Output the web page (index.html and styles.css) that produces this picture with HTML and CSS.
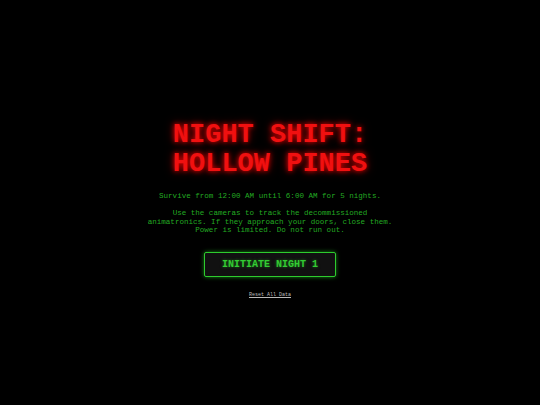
FILE: index.html
```html
<!DOCTYPE html>
<html>
<head>
<meta charset="utf-8">
<link rel="stylesheet" href="styles.css">
</head>
<body>
<main class="screen">
  <h1 class="title">NIGHT SHIFT:<br>HOLLOW PINES</h1>
  <p class="intro">Survive from 12:00 AM until 6:00 AM for 5 nights.</p>
  <p class="desc">Use the cameras to track the decommissioned animatronics. If they approach your doors, close them. Power is limited. Do not run out.</p>
  <button class="start">INITIATE NIGHT 1</button>
  <a class="reset" href="#">Reset All Data</a>
</main>
</body>
</html>
```
FILE: styles.css
```css
html, body {
  margin: 0;
  padding: 0;
  background: #000;
  height: 100%;
}
body {
  font-family: "Liberation Mono", "Courier New", monospace;
}
.screen {
  height: 100vh;
  display: flex;
  flex-direction: column;
  align-items: center;
  justify-content: center;
  text-align: center;
  padding-top: 13px;
  box-sizing: border-box;
}
.title {
  margin: 0;
  font-size: 27px;
  line-height: 29px;
  font-weight: bold;
  color: #f01010;
  text-shadow: 0 0 5px #e00000, 0 0 10px rgba(255,0,0,0.5);
  position: relative;
  top: 1px;
}
.intro {
  margin: 14px 0 0 0;
  font-size: 7.55px;
  line-height: 8.5px;
  color: #22aa22;
}
.desc {
  margin: 8.5px 0 0 0;
  max-width: 245px;
  font-size: 7.55px;
  line-height: 8.5px;
  color: #22aa22;
}
.start {
  margin-top: 17px;
  width: 132px;
  height: 25px;
  background: #111;
  border: 1px solid #2ecc2e;
  border-radius: 2px;
  box-shadow: 0 0 4px rgba(40,220,40,0.6);
  color: #33cc33;
  font-family: "Liberation Mono", "Courier New", monospace;
  font-weight: bold;
  font-size: 10px;
  padding: 0;
  text-shadow: 0 0 3px rgba(40,220,40,0.5);
}
.reset {
  margin-top: 15px;
  font-size: 5px;
  line-height: 6px;
  color: #bbb;
  text-decoration: underline;
}
```
